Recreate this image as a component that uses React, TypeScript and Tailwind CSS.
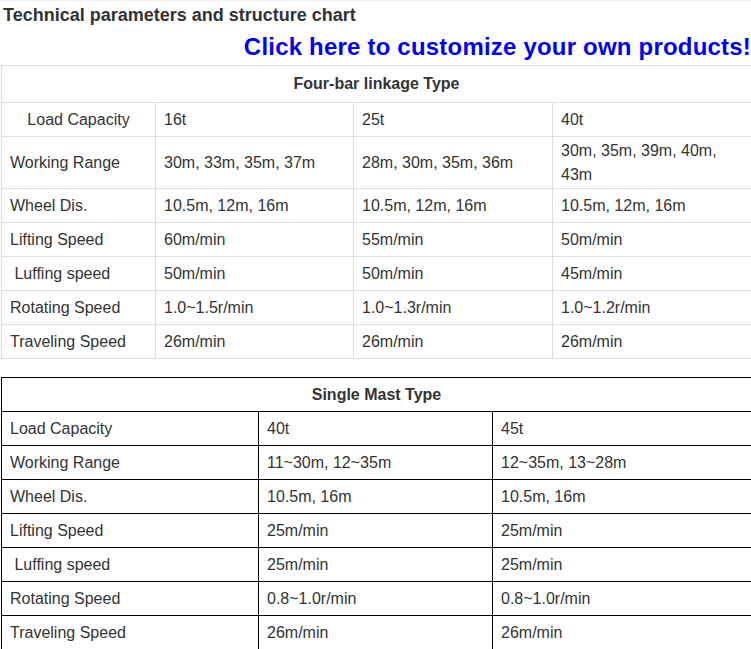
import React from "react";

const t1 = [
  ["Load Capacity", "16t", "25t", "40t"],
  ["Working Range", "30m, 33m, 35m, 37m", "28m, 30m, 35m, 36m", "30m, 35m, 39m, 40m, 43m"],
  ["Wheel Dis.", "10.5m, 12m, 16m", "10.5m, 12m, 16m", "10.5m, 12m, 16m"],
  ["Lifting Speed", "60m/min", "55m/min", "50m/min"],
  ["\u00a0Luffing speed", "50m/min", "50m/min", "45m/min"],
  ["Rotating Speed", "1.0~1.5r/min", "1.0~1.3r/min", "1.0~1.2r/min"],
  ["Traveling Speed", "26m/min", "26m/min", "26m/min"],
];

const t2 = [
  ["Load Capacity", "40t", "45t"],
  ["Working Range", "11~30m, 12~35m", "12~35m, 13~28m"],
  ["Wheel Dis.", "10.5m, 16m", "10.5m, 16m"],
  ["Lifting Speed", "25m/min", "25m/min"],
  ["\u00a0Luffing speed", "25m/min", "25m/min"],
  ["Rotating Speed", "0.8~1.0r/min", "0.8~1.0r/min"],
  ["Traveling Speed", "26m/min", "26m/min"],
];

export default function App() {
  return (
    <div
      className="w-[751px] bg-white text-[#333333]"
      style={{ fontFamily: '"Liberation Sans", Arial, sans-serif' }}
    >
      <div className="h-[1px] bg-[#f8eeee]" />
      <div className="h-[28px] pl-[3px] text-[18px] font-bold leading-[28px]">
        Technical parameters and structure chart
      </div>
      <div className="h-[36px] text-right text-[24px] font-bold leading-[36px] tracking-[0.2px] text-[#0000ee]">
        Click here to customize your own products!
      </div>
      <table className="ml-[1px] w-[750px] table-fixed border-collapse text-[16px] leading-[24px]">
        <colgroup>
          <col className="w-[154px]" />
          <col className="w-[198px]" />
          <col className="w-[199px]" />
          <col className="w-[199px]" />
        </colgroup>
        <tbody>
          <tr className="h-[37px]">
            <td colSpan={4} className="border border-[#dddddd] text-center font-bold">
              Four-bar linkage Type
            </td>
          </tr>
          {t1.map((r, i) => (
            <tr key={i} className={i === 1 ? "h-[52px]" : "h-[34px]"}>
              {r.map((c, j) => (
                <td
                  key={j}
                  className={
                    "border border-[#dddddd] px-2 py-[1px] align-middle " +
                    (i === 0 && j === 0 ? "text-center" : "text-left")
                  }
                >
                  {c}
                </td>
              ))}
            </tr>
          ))}
        </tbody>
      </table>
      <table className="ml-[1px] mt-[18px] w-[750px] table-fixed border-collapse text-[16px] leading-[24px]">
        <colgroup>
          <col className="w-[257px]" />
          <col className="w-[234px]" />
          <col className="w-[259px]" />
        </colgroup>
        <tbody>
          <tr className="h-[34px]">
            <td colSpan={3} className="border border-black text-center font-bold">
              Single Mast Type
            </td>
          </tr>
          {t2.map((r, i) => (
            <tr key={i} className="h-[34px]">
              {r.map((c, j) => (
                <td key={j} className="border border-black px-2 py-[1px] text-left align-middle">
                  {c}
                </td>
              ))}
            </tr>
          ))}
        </tbody>
      </table>
    </div>
  );
}
